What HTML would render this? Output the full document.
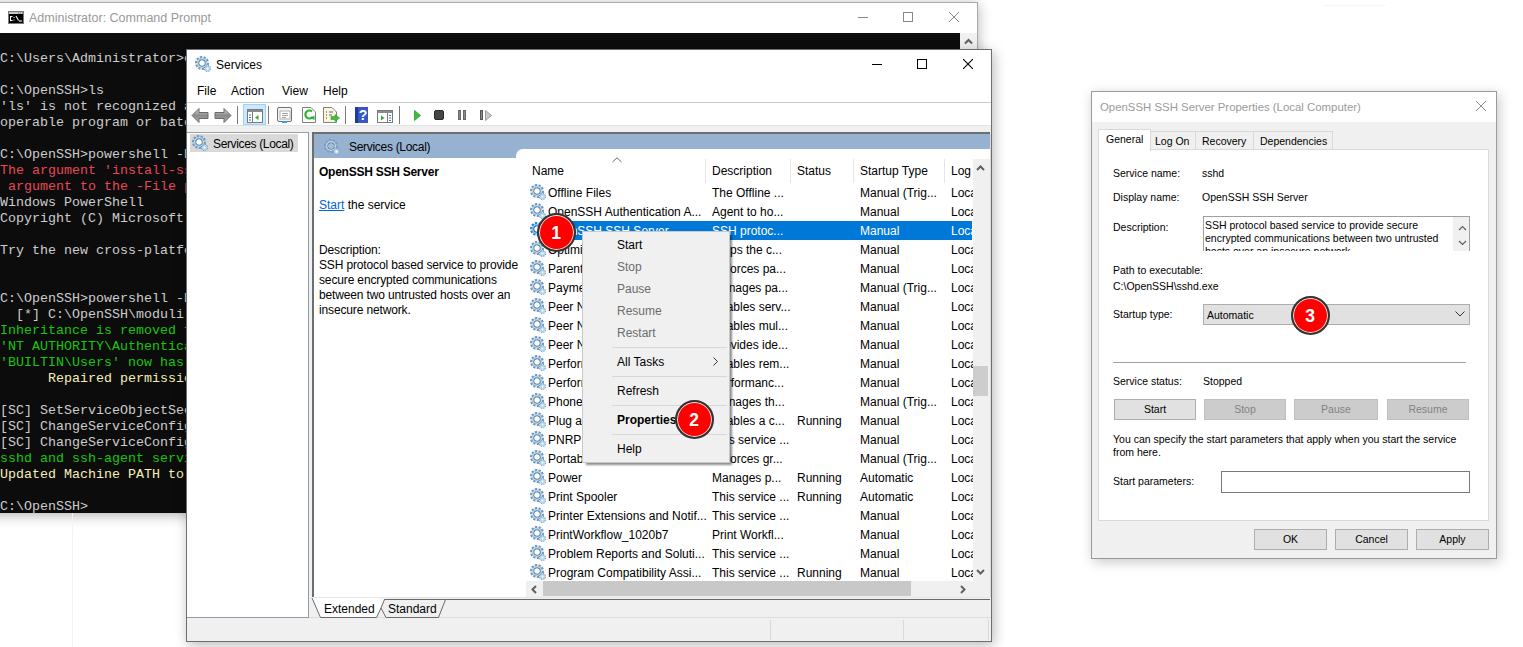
<!DOCTYPE html>
<html><head><meta charset="utf-8">
<style>
*{margin:0;padding:0;box-sizing:border-box}
html,body{width:1523px;height:647px;overflow:hidden;background:#fff}
body{position:relative;font-family:"Liberation Sans",sans-serif;color:#000}
.a{position:absolute}
.t{position:absolute;white-space:pre;line-height:12px;font-size:11.6px}
.mono{font-family:"Liberation Mono",monospace}
/* console */
#con{left:0;top:33px;width:960px;height:480px;background:#0c0c0c}
#con .l{position:absolute;left:0;margin-top:1px;white-space:pre;font-family:"Liberation Mono",monospace;font-size:13.33px;line-height:16px;color:#cccccc}
.r{color:#e74856!important}.g{color:#16c60c!important}.y{color:#f5efb8!important}
.badge{position:absolute;width:39px;height:39px;border-radius:50%;background:#ff0000;border:2px solid #333;box-shadow:inset 0 0 0 1px #e6e6e6;color:#fff;font-weight:bold;font-size:17.5px;line-height:37px;text-align:center;font-family:"Liberation Sans",sans-serif}
.dl{font-size:10.5px;line-height:11px}
.btn{position:absolute;height:21px;background:#e1e1e1;border:1px solid #adadad;font-size:10.5px;line-height:19px;text-align:center;font-family:"Liberation Sans",sans-serif}
.btn.dis{background:#cccccc;border-color:#bfbfbf;color:#838383}
</style></head><body>

<!-- ============ CMD WINDOW ============ -->
<div class="a" style="left:-20px;top:2px;width:998px;height:511px;background:#a9a9a9;box-shadow:0 2px 12px rgba(0,0,0,0.32)"></div>
<div class="a" style="left:72px;top:513px;width:1px;height:134px;background:#f3f3f3"></div>
<div class="a" style="left:0;top:2px;width:978px;height:31px;background:#fff;border-top:1px solid #a9a9a9;border-right:1px solid #a9a9a9"></div>
<!-- cmd icon -->
<svg class="a" style="left:8px;top:11px" width="16" height="13"><rect x="0.5" y="0.5" width="15" height="12" fill="#000" stroke="#7a7a7a"/><rect x="1" y="1" width="14" height="2" fill="#c8c8c8"/><path d="M10 2H11M12 2H13M14 2H15" stroke="#666" stroke-width="1"/>
<path d="M4.5 5.5H2.5V9.5H4.5" stroke="#fff" fill="none" stroke-width="1.1"/><rect x="5.5" y="6" width="1" height="1" fill="#fff"/><rect x="5.5" y="8.5" width="1" height="1" fill="#fff"/><path d="M8 5L10.5 9.5" stroke="#fff" stroke-width="1.1"/><path d="M11 10H14" stroke="#fff" stroke-width="1.1"/></svg>
<div class="t" style="left:29px;top:11px;font-size:12.5px;line-height:14px;color:#999">Administrator: Command Prompt</div>
<!-- cmd buttons -->
<div class="a" style="left:858px;top:17px;width:10px;height:1px;background:#888"></div>
<div class="a" style="left:903px;top:12px;width:10px;height:10px;border:1px solid #888"></div>
<svg class="a" style="left:949px;top:12px" width="10" height="10"><path d="M0 0L10 10M10 0L0 10" stroke="#888" stroke-width="1"/></svg>
<div id="con" class="a">
<div class="l" style="top:17px">C:\Users\Administrator>cd C:\OpenSSH</div>
<div class="l" style="top:49px">C:\OpenSSH>ls</div>
<div class="l" style="top:65px">'ls' is not recognized as an internal or external command,</div>
<div class="l" style="top:81px">operable program or batch file.</div>
<div class="l" style="top:113px">C:\OpenSSH>powershell -ExecutionPolicy Bypass</div>
<div class="l r" style="top:129px">The argument 'install-sshd.ps1' to the -File parameter does not exist.</div>
<div class="l r" style="top:145px"> argument to the -File parameter.</div>
<div class="l" style="top:161px">Windows PowerShell</div>
<div class="l" style="top:177px">Copyright (C) Microsoft Corporation. All rights reserved.</div>
<div class="l" style="top:209px">Try the new cross-platform PowerShell</div>
<div class="l" style="top:257px">C:\OpenSSH>powershell -ExecutionPolicy Bypass -File install-sshd.ps1</div>
<div class="l" style="top:273px">  [*] C:\OpenSSH\moduli</div>
<div class="l g" style="top:289px">Inheritance is removed from 'C:\OpenSSH\moduli'.</div>
<div class="l g" style="top:305px">'NT AUTHORITY\Authenticated Users' has Read access</div>
<div class="l g" style="top:321px">'BUILTIN\Users' now has Read access</div>
<div class="l y" style="top:337px">      Repaired permissions</div>
<div class="l" style="top:369px">[SC] SetServiceObjectSecurity SUCCESS</div>
<div class="l" style="top:385px">[SC] ChangeServiceConfig2 SUCCESS</div>
<div class="l" style="top:401px">[SC] ChangeServiceConfig2 SUCCESS</div>
<div class="l g" style="top:417px">sshd and ssh-agent services successfully installed</div>
<div class="l y" style="top:433px">Updated Machine PATH to include OpenSSH directory</div>
<div class="l" style="top:465px">C:\OpenSSH></div>
</div>
<!-- cmd scrollbar -->
<div class="a" style="left:960px;top:33px;width:17px;height:20px;background:#f0f0f0"></div>
<svg class="a" style="left:964px;top:38px" width="9" height="7"><path d="M1 5.5L4.5 2L8 5.5" stroke="#606060" stroke-width="2" fill="none"/></svg>

<!-- ============ SERVICES WINDOW ============ -->
<div id="svc" class="a" style="left:186px;top:49px;width:806px;height:593px;background:#fff;border:1px solid #6e6e6e;box-shadow:2px 3px 12px rgba(0,0,0,0.28)"></div>


<svg width="0" height="0" style="position:absolute">
<defs>
<symbol id="gear" viewBox="0 0 16 16">
<defs><radialGradient id="gb" cx="0.5" cy="0.5" r="0.55"><stop offset="0.5" stop-color="#d8f2fc"/><stop offset="1" stop-color="#a2cbe8"/></radialGradient></defs>
<path d="M11.99 6.68 L14.09 6.68 L13.68 9.40 L11.67 8.78 L11.23 9.67 L12.93 10.91 L11.00 12.87 L9.73 11.19 L8.85 11.65 L9.49 13.65 L6.78 14.10 L6.75 11.99 L5.76 11.84 L5.11 13.84 L2.65 12.61 L3.86 10.89 L3.15 10.19 L1.45 11.43 L0.18 8.99 L2.17 8.31 L2.01 7.32 L-0.09 7.32 L0.32 4.60 L2.33 5.22 L2.77 4.33 L1.07 3.09 L3.00 1.13 L4.27 2.81 L5.15 2.35 L4.51 0.35 L7.22 -0.10 L7.25 2.01 L8.24 2.16 L8.89 0.16 L11.35 1.39 L10.14 3.11 L10.85 3.81 L12.55 2.57 L13.82 5.01 L11.83 5.69Z" fill="#6e98c2"/>
<circle cx="7" cy="7" r="5.1" fill="url(#gb)"/>
<circle cx="7" cy="7" r="3.2" fill="none" stroke="#6a85a2" stroke-width="1.2"/>
<circle cx="7" cy="7" r="2.5" fill="#fff"/>
<path d="M15.00 12.66 L15.99 12.79 L15.54 14.23 L14.65 13.78 L14.15 14.37 L14.76 15.17 L13.43 15.87 L13.11 14.92 L12.34 15.00 L12.21 15.99 L10.77 15.54 L11.22 14.65 L10.63 14.15 L9.83 14.76 L9.13 13.43 L10.08 13.11 L10.00 12.34 L9.01 12.21 L9.46 10.77 L10.35 11.22 L10.85 10.63 L10.24 9.83 L11.57 9.13 L11.89 10.08 L12.66 10.00 L12.79 9.01 L14.23 9.46 L13.78 10.35 L14.37 10.85 L15.17 10.24 L15.87 11.57 L14.92 11.89Z" fill="#5f8bb8"/>
<circle cx="12.5" cy="12.5" r="2.6" fill="#b4d8ee"/>
<circle cx="12.5" cy="12.5" r="1.0" fill="#fff"/>
</symbol>
<symbol id="gearhdr" viewBox="0 0 16 16">
<defs><radialGradient id="gbh" cx="0.5" cy="0.5" r="0.55"><stop offset="0.5" stop-color="#d8f2fc"/><stop offset="1" stop-color="#a2cbe8"/></radialGradient></defs>
<path d="M11.99 6.68 L14.09 6.68 L13.68 9.40 L11.67 8.78 L11.23 9.67 L12.93 10.91 L11.00 12.87 L9.73 11.19 L8.85 11.65 L9.49 13.65 L6.78 14.10 L6.75 11.99 L5.76 11.84 L5.11 13.84 L2.65 12.61 L3.86 10.89 L3.15 10.19 L1.45 11.43 L0.18 8.99 L2.17 8.31 L2.01 7.32 L-0.09 7.32 L0.32 4.60 L2.33 5.22 L2.77 4.33 L1.07 3.09 L3.00 1.13 L4.27 2.81 L5.15 2.35 L4.51 0.35 L7.22 -0.10 L7.25 2.01 L8.24 2.16 L8.89 0.16 L11.35 1.39 L10.14 3.11 L10.85 3.81 L12.55 2.57 L13.82 5.01 L11.83 5.69Z" fill="#7d9cc2"/>
<circle cx="7" cy="7" r="5.1" fill="url(#gbh)"/>
<circle cx="7" cy="7" r="3.2" fill="none" stroke="#6a85a2" stroke-width="1.2"/>
<circle cx="7" cy="7" r="2.5" fill="#a4bcd6"/>
<path d="M15.00 12.66 L15.99 12.79 L15.54 14.23 L14.65 13.78 L14.15 14.37 L14.76 15.17 L13.43 15.87 L13.11 14.92 L12.34 15.00 L12.21 15.99 L10.77 15.54 L11.22 14.65 L10.63 14.15 L9.83 14.76 L9.13 13.43 L10.08 13.11 L10.00 12.34 L9.01 12.21 L9.46 10.77 L10.35 11.22 L10.85 10.63 L10.24 9.83 L11.57 9.13 L11.89 10.08 L12.66 10.00 L12.79 9.01 L14.23 9.46 L13.78 10.35 L14.37 10.85 L15.17 10.24 L15.87 11.57 L14.92 11.89Z" fill="#7d9cc2"/>
<circle cx="12.5" cy="12.5" r="2.6" fill="#b8d2e6"/>
<circle cx="12.5" cy="12.5" r="1.0" fill="#fff"/>
</symbol>
<symbol id="gearsel" viewBox="0 0 16 16">
<defs><radialGradient id="gbs" cx="0.5" cy="0.5" r="0.55"><stop offset="0.5" stop-color="#cfe6fb"/><stop offset="1" stop-color="#6aaef0"/></radialGradient></defs>
<path d="M11.99 6.68 L14.09 6.68 L13.68 9.40 L11.67 8.78 L11.23 9.67 L12.93 10.91 L11.00 12.87 L9.73 11.19 L8.85 11.65 L9.49 13.65 L6.78 14.10 L6.75 11.99 L5.76 11.84 L5.11 13.84 L2.65 12.61 L3.86 10.89 L3.15 10.19 L1.45 11.43 L0.18 8.99 L2.17 8.31 L2.01 7.32 L-0.09 7.32 L0.32 4.60 L2.33 5.22 L2.77 4.33 L1.07 3.09 L3.00 1.13 L4.27 2.81 L5.15 2.35 L4.51 0.35 L7.22 -0.10 L7.25 2.01 L8.24 2.16 L8.89 0.16 L11.35 1.39 L10.14 3.11 L10.85 3.81 L12.55 2.57 L13.82 5.01 L11.83 5.69Z" fill="#2a7fd8"/>
<circle cx="7" cy="7" r="5.1" fill="url(#gbs)"/>
<circle cx="7" cy="7" r="3.2" fill="none" stroke="#2a6cc0" stroke-width="1.2"/>
<circle cx="7" cy="7" r="2.5" fill="#fff"/>
<path d="M15.00 12.66 L15.99 12.79 L15.54 14.23 L14.65 13.78 L14.15 14.37 L14.76 15.17 L13.43 15.87 L13.11 14.92 L12.34 15.00 L12.21 15.99 L10.77 15.54 L11.22 14.65 L10.63 14.15 L9.83 14.76 L9.13 13.43 L10.08 13.11 L10.00 12.34 L9.01 12.21 L9.46 10.77 L10.35 11.22 L10.85 10.63 L10.24 9.83 L11.57 9.13 L11.89 10.08 L12.66 10.00 L12.79 9.01 L14.23 9.46 L13.78 10.35 L14.37 10.85 L15.17 10.24 L15.87 11.57 L14.92 11.89Z" fill="#2a7fd8"/>
<circle cx="12.5" cy="12.5" r="2.6" fill="#9ccaf6"/>
<circle cx="12.5" cy="12.5" r="1.0" fill="#fff"/>
</symbol>
</defs></svg>

<!-- title -->
<svg class="a" style="left:195px;top:56px" width="16" height="16"><use href="#gear"/></svg>
<div class="t" style="left:216px;top:59px;font-size:12px">Services</div>
<div class="a" style="left:872px;top:64px;width:10px;height:1px;background:#000"></div>
<div class="a" style="left:917px;top:59px;width:10px;height:10px;border:1px solid #000"></div>
<svg class="a" style="left:963px;top:59px" width="10" height="10"><path d="M0 0L10 10M10 0L0 10" stroke="#000" stroke-width="1.1"/></svg>
<!-- menu -->
<div class="t" style="left:197px;top:85px;font-size:12px">File</div>
<div class="t" style="left:231px;top:85px;font-size:12px">Action</div>
<div class="t" style="left:282px;top:85px;font-size:12px">View</div>
<div class="t" style="left:323px;top:85px;font-size:12px">Help</div>
<div class="a" style="left:187px;top:102px;width:804px;height:1px;background:#c9c9c9"></div>
<!-- toolbar -->
<svg class="a" style="left:191px;top:107px" width="18" height="17"><defs><linearGradient id="ag" x1="0" y1="0" x2="0" y2="1"><stop offset="0" stop-color="#d8d8d8"/><stop offset="0.5" stop-color="#8a8a8a"/><stop offset="1" stop-color="#b0b0b0"/></linearGradient></defs><path d="M1 8.5L8 1.5V5.5H17V11.5H8V15.5Z" fill="url(#ag)" stroke="#6a6a6a" stroke-width="1"/></svg>
<svg class="a" style="left:214px;top:107px" width="18" height="17"><path d="M17 8.5L10 1.5V5.5H1V11.5H10V15.5Z" fill="url(#ag)" stroke="#6a6a6a" stroke-width="1"/></svg>
<div class="a" style="left:237px;top:106px;width:1px;height:18px;background:#7a7a7a"></div>
<div class="a" style="left:243px;top:104px;width:23px;height:21px;background:#cce8ff;border:1px solid #99d1ff"></div>
<svg class="a" style="left:247px;top:109px" width="16" height="14"><rect x="0.5" y="0.5" width="15" height="13" fill="#fff" stroke="#7a7a7a"/><rect x="1" y="1" width="14" height="2" fill="#8a8a8a"/><path d="M5.5 3V13.5" stroke="#7a7a7a"/><path d="M2 6H4M2 8.5H4M2 11H4" stroke="#3b78c4" stroke-width="1"/><path d="M11.5 6L8 8.5L11.5 11Z" fill="#2fae2f"/></svg>
<div class="a" style="left:268px;top:106px;width:1px;height:18px;background:#7a7a7a"></div>
<svg class="a" style="left:277px;top:107px" width="16" height="16"><rect x="0.5" y="0.5" width="14" height="14" rx="1.5" fill="#f4f4f4" stroke="#707070"/><rect x="3" y="4" width="10" height="8" fill="#fff" stroke="#a0a0a0" stroke-width="0.8"/><path d="M5 6.5H11M5 8.5H11M5 10.5H9" stroke="#8a8a8a" stroke-width="0.8"/><rect x="5" y="14" width="5" height="2" fill="#2ea0e0"/></svg>
<svg class="a" style="left:302px;top:107px" width="14" height="16"><path d="M0.5 0.5H9L13.5 5V15.5H0.5Z" fill="#fff" stroke="#808080"/><path d="M10 4.5A4 4 0 1 0 10.5 10" fill="none" stroke="#2db52d" stroke-width="2.2"/><path d="M8 11L12.5 8.5L12.5 13Z" fill="#2db52d"/></svg>
<svg class="a" style="left:323px;top:107px" width="17" height="16"><path d="M0.5 0.5H9L13.5 5V15.5H0.5Z" fill="#fbf6d8" stroke="#808080"/><path d="M3 5H4M3 8H4M3 11H4" stroke="#444"/><path d="M6 5H10M6 8H9" stroke="#5566aa"/><path d="M8 9.5H12V7.5L16.5 11L12 14.5V12.5H8Z" fill="#3fbf3f" stroke="#2a9a2a" stroke-width="0.6"/></svg>
<div class="a" style="left:345px;top:106px;width:1px;height:18px;background:#7a7a7a"></div>
<svg class="a" style="left:355px;top:107px" width="13" height="16"><rect x="0" y="0" width="13" height="16" fill="#3457c9"/><rect x="0" y="0" width="3" height="16" fill="#23399a"/><text x="8" y="13" font-family="Liberation Sans" font-weight="bold" font-size="14" fill="#fff" text-anchor="middle">?</text></svg>
<svg class="a" style="left:377px;top:110px" width="16" height="13"><rect x="0.5" y="0.5" width="15" height="12" fill="#fff" stroke="#7a7a7a"/><rect x="1" y="1" width="14" height="2" fill="#8a8a8a"/><path d="M10.5 3V12.5" stroke="#7a7a7a"/><path d="M12 5.5H14M12 8H14M12 10.5H14" stroke="#3b78c4"/><path d="M4 5.5L7.5 8L4 10.5Z" fill="#2fae2f"/></svg>
<div class="a" style="left:399px;top:106px;width:1px;height:18px;background:#7a7a7a"></div>
<svg class="a" style="left:414px;top:110px" width="7" height="11"><path d="M0.5 0.5L6.5 5.5L0.5 10.5Z" fill="#3cc03c" stroke="#2a9a2a" stroke-width="0.8"/></svg>
<div class="a" style="left:434px;top:110px;width:10px;height:10px;background:#454545;border-radius:2px;border:1px solid #2a2a2a"></div>
<div class="a" style="left:458px;top:110px;width:3px;height:10px;background:#8c8c8c;border:1px solid #666"></div>
<div class="a" style="left:463px;top:110px;width:3px;height:10px;background:#8c8c8c;border:1px solid #666"></div>
<div class="a" style="left:480px;top:110px;width:3px;height:10px;background:#8c8c8c;border:1px solid #555"></div>
<svg class="a" style="left:485px;top:110px" width="7" height="11"><path d="M0.5 0.5L6.5 5.5L0.5 10.5Z" fill="#c8c8c8" stroke="#8a8a8a" stroke-width="0.8"/></svg>
<!-- client area grey -->
<div class="a" style="left:187px;top:125px;width:804px;height:516px;background:#f0f0f0;border-top:1px solid #e3e3e3"></div>
<!-- left pane -->
<div class="a" style="left:187px;top:132px;width:122px;height:486px;background:#fff;border-top:1px solid #a0a0a0;border-right:1px solid #8e9aa6;border-bottom:1px solid #8e9aa6"></div>
<div class="a" style="left:190px;top:134px;width:108px;height:18px;background:#d9d9d9"></div>
<svg class="a" style="left:192px;top:135px" width="16" height="16"><use href="#gear"/></svg>
<div class="t" style="left:213px;top:138px;font-size:12px;letter-spacing:-0.35px">Services (Local)</div>
<!-- right pane -->
<div class="a" style="left:312px;top:132px;width:678px;height:466px;background:#fff;border-top:2px solid #6e6e6e;border-left:2px solid #6e6e6e"></div>
<div class="a" style="left:314px;top:134px;width:676px;height:24px;background:#97b2d0"></div>
<div class="a" style="left:516px;top:149px;width:474px;height:20px;background:#fff;border-top-left-radius:7px"></div>
<svg class="a" style="left:323.5px;top:138.5px" width="16" height="16"><use href="#gearhdr"/></svg>
<div class="t" style="left:349px;top:141px;font-size:12px;letter-spacing:-0.3px">Services (Local)</div>


<!-- detail pane -->
<div class="t" style="left:319px;top:166px;font-size:12px;font-weight:bold;letter-spacing:-0.25px">OpenSSH SSH Server</div>
<div class="t" style="left:319px;top:199px;font-size:12px"><span style="color:#0066cc;text-decoration:underline">Start</span> the service</div>
<div class="t" style="left:319px;top:243px;font-size:12px;line-height:15px;letter-spacing:-0.14px">Description:
SSH protocol based service to provide
secure encrypted communications
between two untrusted hosts over an
insecure network.</div>
<!-- list header -->
<div class="t" style="left:532px;top:165px;font-size:12px">Name</div>
<svg class="a" style="left:612px;top:157px" width="10" height="6"><path d="M0.5 5L5 0.8L9.5 5" stroke="#6a6a6a" fill="none" stroke-width="1"/></svg>
<div class="a" style="left:705px;top:159px;width:1px;height:24px;background:#e5e5e5"></div>
<div class="a" style="left:790px;top:159px;width:1px;height:24px;background:#e5e5e5"></div>
<div class="a" style="left:853px;top:159px;width:1px;height:24px;background:#e5e5e5"></div>
<div class="a" style="left:944px;top:159px;width:1px;height:24px;background:#e5e5e5"></div>
<div class="t" style="left:712px;top:165px;font-size:12px">Description</div>
<div class="t" style="left:797px;top:165px;font-size:12px">Status</div>
<div class="t" style="left:860px;top:165px;font-size:12px">Startup Type</div>
<div class="t" style="left:951px;top:165px;font-size:12px">Log</div>
<div class="a" style="left:516px;top:183px;width:457px;height:398px;overflow:hidden">

<svg class="a" style="left:14px;top:1px" width="16" height="16"><use href="#gear"/></svg>
<div class="t" style="left:32px;top:4px;font-size:12px;">Offline Files</div>
<div class="t" style="left:196px;top:4px;font-size:12px;">The Offline ...</div>
<div class="t" style="left:344px;top:4px;font-size:12px;">Manual (Trig...</div>
<div class="t" style="left:435px;top:4px;font-size:12px;">Local Syste</div>
<svg class="a" style="left:14px;top:20px" width="16" height="16"><use href="#gear"/></svg>
<div class="t" style="left:32px;top:23px;font-size:12px;">OpenSSH Authentication A...</div>
<div class="t" style="left:196px;top:23px;font-size:12px;">Agent to ho...</div>
<div class="t" style="left:344px;top:23px;font-size:12px;">Manual</div>
<div class="t" style="left:435px;top:23px;font-size:12px;">Local Syste</div>
<div class="a" style="left:31px;top:38px;width:425px;height:19px;background:#0078d7"></div>
<svg class="a" style="left:14px;top:39px" width="16" height="16"><use href="#gearsel"/></svg>
<div class="t" style="left:32px;top:42px;font-size:12px;color:#fff;">OpenSSH SSH Server</div>
<div class="t" style="left:196px;top:42px;font-size:12px;color:#fff;">SSH protoc...</div>
<div class="t" style="left:344px;top:42px;font-size:12px;color:#fff;">Manual</div>
<div class="t" style="left:435px;top:42px;font-size:12px;color:#fff;">Local Syste</div>
<svg class="a" style="left:14px;top:58px" width="16" height="16"><use href="#gear"/></svg>
<div class="t" style="left:32px;top:61px;font-size:12px;">Optimize drives</div>
<div class="t" style="left:196px;top:61px;font-size:12px;">Helps the c...</div>
<div class="t" style="left:344px;top:61px;font-size:12px;">Manual</div>
<div class="t" style="left:435px;top:61px;font-size:12px;">Local Syste</div>
<svg class="a" style="left:14px;top:77px" width="16" height="16"><use href="#gear"/></svg>
<div class="t" style="left:32px;top:80px;font-size:12px;">Parental Controls</div>
<div class="t" style="left:196px;top:80px;font-size:12px;">Enforces pa...</div>
<div class="t" style="left:344px;top:80px;font-size:12px;">Manual</div>
<div class="t" style="left:435px;top:80px;font-size:12px;">Local Syste</div>
<svg class="a" style="left:14px;top:96px" width="16" height="16"><use href="#gear"/></svg>
<div class="t" style="left:32px;top:99px;font-size:12px;">Payments and NFC/SE Man...</div>
<div class="t" style="left:196px;top:99px;font-size:12px;">Manages pa...</div>
<div class="t" style="left:344px;top:99px;font-size:12px;">Manual (Trig...</div>
<div class="t" style="left:435px;top:99px;font-size:12px;">Local Syste</div>
<svg class="a" style="left:14px;top:115px" width="16" height="16"><use href="#gear"/></svg>
<div class="t" style="left:32px;top:118px;font-size:12px;">Peer Name Resolution Prot...</div>
<div class="t" style="left:196px;top:118px;font-size:12px;">Enables serv...</div>
<div class="t" style="left:344px;top:118px;font-size:12px;">Manual</div>
<div class="t" style="left:435px;top:118px;font-size:12px;">Local Syste</div>
<svg class="a" style="left:14px;top:134px" width="16" height="16"><use href="#gear"/></svg>
<div class="t" style="left:32px;top:137px;font-size:12px;">Peer Networking Grouping</div>
<div class="t" style="left:196px;top:137px;font-size:12px;">Enables mul...</div>
<div class="t" style="left:344px;top:137px;font-size:12px;">Manual</div>
<div class="t" style="left:435px;top:137px;font-size:12px;">Local Syste</div>
<svg class="a" style="left:14px;top:153px" width="16" height="16"><use href="#gear"/></svg>
<div class="t" style="left:32px;top:156px;font-size:12px;">Peer Networking Identity M...</div>
<div class="t" style="left:196px;top:156px;font-size:12px;">Provides ide...</div>
<div class="t" style="left:344px;top:156px;font-size:12px;">Manual</div>
<div class="t" style="left:435px;top:156px;font-size:12px;">Local Syste</div>
<svg class="a" style="left:14px;top:172px" width="16" height="16"><use href="#gear"/></svg>
<div class="t" style="left:32px;top:175px;font-size:12px;">Performance Counter DLL ...</div>
<div class="t" style="left:196px;top:175px;font-size:12px;">Enables rem...</div>
<div class="t" style="left:344px;top:175px;font-size:12px;">Manual</div>
<div class="t" style="left:435px;top:175px;font-size:12px;">Local Syste</div>
<svg class="a" style="left:14px;top:191px" width="16" height="16"><use href="#gear"/></svg>
<div class="t" style="left:32px;top:194px;font-size:12px;">Performance Logs & Alerts</div>
<div class="t" style="left:196px;top:194px;font-size:12px;">Performanc...</div>
<div class="t" style="left:344px;top:194px;font-size:12px;">Manual</div>
<div class="t" style="left:435px;top:194px;font-size:12px;">Local Syste</div>
<svg class="a" style="left:14px;top:210px" width="16" height="16"><use href="#gear"/></svg>
<div class="t" style="left:32px;top:213px;font-size:12px;">Phone Service</div>
<div class="t" style="left:196px;top:213px;font-size:12px;">Manages th...</div>
<div class="t" style="left:344px;top:213px;font-size:12px;">Manual (Trig...</div>
<div class="t" style="left:435px;top:213px;font-size:12px;">Local Syste</div>
<svg class="a" style="left:14px;top:229px" width="16" height="16"><use href="#gear"/></svg>
<div class="t" style="left:32px;top:232px;font-size:12px;">Plug and Play</div>
<div class="t" style="left:196px;top:232px;font-size:12px;">Enables a c...</div>
<div class="t" style="left:281px;top:232px;font-size:12px;">Running</div>
<div class="t" style="left:344px;top:232px;font-size:12px;">Manual</div>
<div class="t" style="left:435px;top:232px;font-size:12px;">Local Syste</div>
<svg class="a" style="left:14px;top:248px" width="16" height="16"><use href="#gear"/></svg>
<div class="t" style="left:32px;top:251px;font-size:12px;">PNRP Machine Name Publi...</div>
<div class="t" style="left:196px;top:251px;font-size:12px;">This service ...</div>
<div class="t" style="left:344px;top:251px;font-size:12px;">Manual</div>
<div class="t" style="left:435px;top:251px;font-size:12px;">Local Syste</div>
<svg class="a" style="left:14px;top:267px" width="16" height="16"><use href="#gear"/></svg>
<div class="t" style="left:32px;top:270px;font-size:12px;">Portable Device Enumerator...</div>
<div class="t" style="left:196px;top:270px;font-size:12px;">Enforces gr...</div>
<div class="t" style="left:344px;top:270px;font-size:12px;">Manual (Trig...</div>
<div class="t" style="left:435px;top:270px;font-size:12px;">Local Syste</div>
<svg class="a" style="left:14px;top:286px" width="16" height="16"><use href="#gear"/></svg>
<div class="t" style="left:32px;top:289px;font-size:12px;">Power</div>
<div class="t" style="left:196px;top:289px;font-size:12px;">Manages p...</div>
<div class="t" style="left:281px;top:289px;font-size:12px;">Running</div>
<div class="t" style="left:344px;top:289px;font-size:12px;">Automatic</div>
<div class="t" style="left:435px;top:289px;font-size:12px;">Local Syste</div>
<svg class="a" style="left:14px;top:305px" width="16" height="16"><use href="#gear"/></svg>
<div class="t" style="left:32px;top:308px;font-size:12px;">Print Spooler</div>
<div class="t" style="left:196px;top:308px;font-size:12px;">This service ...</div>
<div class="t" style="left:281px;top:308px;font-size:12px;">Running</div>
<div class="t" style="left:344px;top:308px;font-size:12px;">Automatic</div>
<div class="t" style="left:435px;top:308px;font-size:12px;">Local Syste</div>
<svg class="a" style="left:14px;top:324px" width="16" height="16"><use href="#gear"/></svg>
<div class="t" style="left:32px;top:327px;font-size:12px;">Printer Extensions and Notif...</div>
<div class="t" style="left:196px;top:327px;font-size:12px;">This service ...</div>
<div class="t" style="left:344px;top:327px;font-size:12px;">Manual</div>
<div class="t" style="left:435px;top:327px;font-size:12px;">Local Syste</div>
<svg class="a" style="left:14px;top:343px" width="16" height="16"><use href="#gear"/></svg>
<div class="t" style="left:32px;top:346px;font-size:12px;">PrintWorkflow_1020b7</div>
<div class="t" style="left:196px;top:346px;font-size:12px;">Print Workfl...</div>
<div class="t" style="left:344px;top:346px;font-size:12px;">Manual</div>
<div class="t" style="left:435px;top:346px;font-size:12px;">Local Syste</div>
<svg class="a" style="left:14px;top:362px" width="16" height="16"><use href="#gear"/></svg>
<div class="t" style="left:32px;top:365px;font-size:12px;">Problem Reports and Soluti...</div>
<div class="t" style="left:196px;top:365px;font-size:12px;">This service ...</div>
<div class="t" style="left:344px;top:365px;font-size:12px;">Manual</div>
<div class="t" style="left:435px;top:365px;font-size:12px;">Local Syste</div>
<svg class="a" style="left:14px;top:381px" width="16" height="16"><use href="#gear"/></svg>
<div class="t" style="left:32px;top:384px;font-size:12px;">Program Compatibility Assi...</div>
<div class="t" style="left:196px;top:384px;font-size:12px;">This service ...</div>
<div class="t" style="left:281px;top:384px;font-size:12px;">Running</div>
<div class="t" style="left:344px;top:384px;font-size:12px;">Manual</div>
<div class="t" style="left:435px;top:384px;font-size:12px;">Local Syste</div>
</div>

<!-- v scrollbar -->
<div class="a" style="left:973px;top:159px;width:17px;height:438px;background:#f0f0f0"></div>
<div class="a" style="left:990px;top:134px;width:1px;height:463px;background:#dcdcdc"></div>
<svg class="a" style="left:976px;top:165px" width="9" height="6"><path d="M1 5L4.5 1.5L8 5" stroke="#606060" stroke-width="2" fill="none"/></svg>
<svg class="a" style="left:976px;top:569px" width="9" height="6"><path d="M1 1L4.5 4.5L8 1" stroke="#606060" stroke-width="2" fill="none"/></svg>
<div class="a" style="left:973px;top:366px;width:15px;height:30px;background:#cdcdcd"></div>
<!-- h scrollbar -->
<div class="a" style="left:526px;top:581px;width:464px;height:16px;background:#f0f0f0"></div>
<svg class="a" style="left:531px;top:585px" width="6" height="9"><path d="M5 1L1.5 4.5L5 8" stroke="#606060" stroke-width="2" fill="none"/></svg>
<svg class="a" style="left:960px;top:585px" width="6" height="9"><path d="M1 1L4.5 4.5L1 8" stroke="#606060" stroke-width="2" fill="none"/></svg>
<div class="a" style="left:543px;top:581px;width:368px;height:15px;background:#c8c8c8"></div>
<!-- tabs strip -->
<div class="a" style="left:312px;top:597px;width:678px;height:21px;background:#f0f0f0"></div>
<div class="a" style="left:314px;top:597px;width:676px;height:1px;background:#e6e6e6"></div>
<div class="a" style="left:384px;top:599px;width:606px;height:1px;background:#6a6a6a"></div>
<div class="a" style="left:309px;top:617px;width:682px;height:1px;background:#dcdcdc"></div>
<svg class="a" style="left:310px;top:597px" width="160" height="22">
<path d="M2 1L10.5 20.5H66.5L71 11L74.5 2.5H70V1Z" fill="#fff"/>
<path d="M2 1L10.5 20.5H66.5L71 11" fill="none" stroke="#6a6a6a" stroke-width="1"/>
<path d="M74.5 2.5L71 11L76 20.5H128.5L135.5 2.5Z" fill="#f0f0f0" stroke="#6a6a6a" stroke-width="1"/>
</svg>
<div class="t" style="left:324px;top:603px;font-size:12px">Extended</div>
<div class="t" style="left:388px;top:603px;font-size:12px">Standard</div>
<!-- status bar -->
<div class="a" style="left:770px;top:620px;width:1px;height:20px;background:#d9d9d9"></div>
<div class="a" style="left:903px;top:620px;width:1px;height:20px;background:#d9d9d9"></div>
<div class="a" style="left:988px;top:620px;width:1px;height:20px;background:#d9d9d9"></div>


<!-- context menu -->
<div class="a" style="left:582px;top:231px;width:148px;height:232px;background:#f0f0f0;border:1px solid #c8c8c8;box-shadow:3px 3px 2px -1px rgba(0,0,0,0.45)"></div>
<div class="t" style="left:617px;top:239px;font-size:12px">Start</div>
<div class="t" style="left:617px;top:261px;font-size:12px;color:#6d6d6d">Stop</div>
<div class="t" style="left:617px;top:283px;font-size:12px;color:#6d6d6d">Pause</div>
<div class="t" style="left:617px;top:305px;font-size:12px;color:#6d6d6d">Resume</div>
<div class="t" style="left:617px;top:327px;font-size:12px;color:#6d6d6d">Restart</div>
<div class="a" style="left:612px;top:347px;width:115px;height:1px;background:#d7d7d7"></div>
<div class="t" style="left:617px;top:356px;font-size:12px">All Tasks</div>
<svg class="a" style="left:713px;top:357px" width="5" height="9"><path d="M0.5 0.5L4.5 4.5L0.5 8.5" stroke="#333" fill="none" stroke-width="1"/></svg>
<div class="a" style="left:612px;top:376px;width:115px;height:1px;background:#d7d7d7"></div>
<div class="t" style="left:617px;top:385px;font-size:12px">Refresh</div>
<div class="a" style="left:612px;top:405px;width:115px;height:1px;background:#d7d7d7"></div>
<div class="t" style="left:617px;top:414px;font-size:12px;font-weight:bold">Properties</div>
<div class="a" style="left:612px;top:434px;width:115px;height:1px;background:#d7d7d7"></div>
<div class="t" style="left:617px;top:443px;font-size:12px">Help</div>
<!-- badges -->
<div class="badge" style="left:536.5px;top:212.5px">1</div>
<div class="badge" style="left:674.5px;top:399.5px">2</div>

<!-- ============ PROPERTIES DIALOG ============ -->
<div id="dlg" class="a" style="left:1091px;top:91px;width:406px;height:468px;background:#f0f0f0;border:1px solid #9a9a9a;box-shadow:2px 3px 12px rgba(0,0,0,0.22)"></div>
<div class="a" style="left:1092px;top:92px;width:404px;height:30px;background:#fff"></div>
<div class="t" style="left:1100px;top:101px;font-size:11.4px;line-height:12px;color:#9a9a9a">OpenSSH SSH Server Properties (Local Computer)</div>
<svg class="a" style="left:1476px;top:101px" width="10" height="10"><path d="M0 0L10 10M10 0L0 10" stroke="#8a8a8a" stroke-width="1"/></svg>
<!-- tabs -->
<div class="a" style="left:1150px;top:131px;width:46px;height:19px;background:#f0f0f0;border:1px solid #d9d9d9;border-bottom:none"></div>
<div class="a" style="left:1195px;top:131px;width:59px;height:19px;background:#f0f0f0;border:1px solid #d9d9d9;border-bottom:none"></div>
<div class="a" style="left:1253px;top:131px;width:80px;height:19px;background:#f0f0f0;border:1px solid #d9d9d9;border-bottom:none"></div>
<div class="a" style="left:1098px;top:149px;width:391px;height:372px;background:#fff;border:1px solid #d9d9d9"></div>
<div class="a" style="left:1098px;top:129px;width:53px;height:22px;background:#fff;border:1px solid #d9d9d9;border-bottom:none"></div>
<div class="t dl" style="left:1106px;top:134px">General</div>
<div class="t dl" style="left:1155px;top:136px">Log On</div>
<div class="t dl" style="left:1202px;top:136px">Recovery</div>
<div class="t dl" style="left:1260px;top:136px">Dependencies</div>
<!-- content -->
<div class="t dl" style="left:1113px;top:168px">Service name:</div>
<div class="t dl" style="left:1202px;top:168px">sshd</div>
<div class="t dl" style="left:1113px;top:192px">Display name:</div>
<div class="t dl" style="left:1202px;top:192px">OpenSSH SSH Server</div>
<div class="t dl" style="left:1113px;top:222px">Description:</div>
<div class="a" style="left:1203px;top:216px;width:267px;height:35px;border:1px solid #a0a0a0;border-bottom:none;overflow:hidden;background:#fff">
<div class="t dl" style="left:1px;top:2px;line-height:13px">SSH protocol based service to provide secure
encrypted communications between two untrusted
hosts over an insecure network.</div>
<div class="a" style="left:249px;top:0;width:17px;height:35px;background:#f0f0f0"></div>
<svg class="a" style="left:254px;top:8px" width="9" height="6"><path d="M1 5L4.5 1.5L8 5" stroke="#606060" stroke-width="1.2" fill="none"/></svg>
<svg class="a" style="left:254px;top:23px" width="9" height="6"><path d="M1 1L4.5 4.5L8 1" stroke="#606060" stroke-width="1.2" fill="none"/></svg>
</div>
<div class="t dl" style="left:1113px;top:265px">Path to executable:</div>
<div class="t dl" style="left:1113px;top:281px">C:\OpenSSH\sshd.exe</div>
<div class="t dl" style="left:1113px;top:309px">Startup type:</div>
<div class="a" style="left:1203px;top:304px;width:267px;height:21px;background:#e1e1e1;border:1px solid #adadad"></div>
<div class="t dl" style="left:1207px;top:310px">Automatic</div>
<svg class="a" style="left:1455px;top:311px" width="10" height="6"><path d="M0.5 0.5L5 5L9.5 0.5" stroke="#333" stroke-width="1" fill="none"/></svg>
<div class="a" style="left:1113px;top:362px;width:353px;height:1px;background:#a0a0a0"></div>
<div class="t dl" style="left:1113px;top:376px">Service status:</div>
<div class="t dl" style="left:1203px;top:376px">Stopped</div>
<div class="btn" style="left:1114px;top:399px;width:82px">Start</div>
<div class="btn dis" style="left:1204px;top:399px;width:82px">Stop</div>
<div class="btn dis" style="left:1294px;top:399px;width:84px">Pause</div>
<div class="btn dis" style="left:1387px;top:399px;width:82px">Resume</div>
<div class="t dl" style="left:1113px;top:433px;line-height:13px">You can specify the start parameters that apply when you start the service
from here.</div>
<div class="t dl" style="left:1113px;top:476px">Start parameters:</div>
<div class="a" style="left:1221px;top:471px;width:249px;height:22px;background:#fff;border:1px solid #7a7a7a"></div>
<div class="btn" style="left:1254px;top:529px;width:73px;height:21px">OK</div>
<div class="btn" style="left:1335px;top:529px;width:73px;height:21px">Cancel</div>
<div class="btn" style="left:1416px;top:529px;width:73px;height:21px">Apply</div>
<div class="badge" style="left:1290.5px;top:295.5px">3</div>
<div class="a" style="left:1322px;top:5px;width:64px;height:1px;background:#f6f6f6"></div>
</body></html>
